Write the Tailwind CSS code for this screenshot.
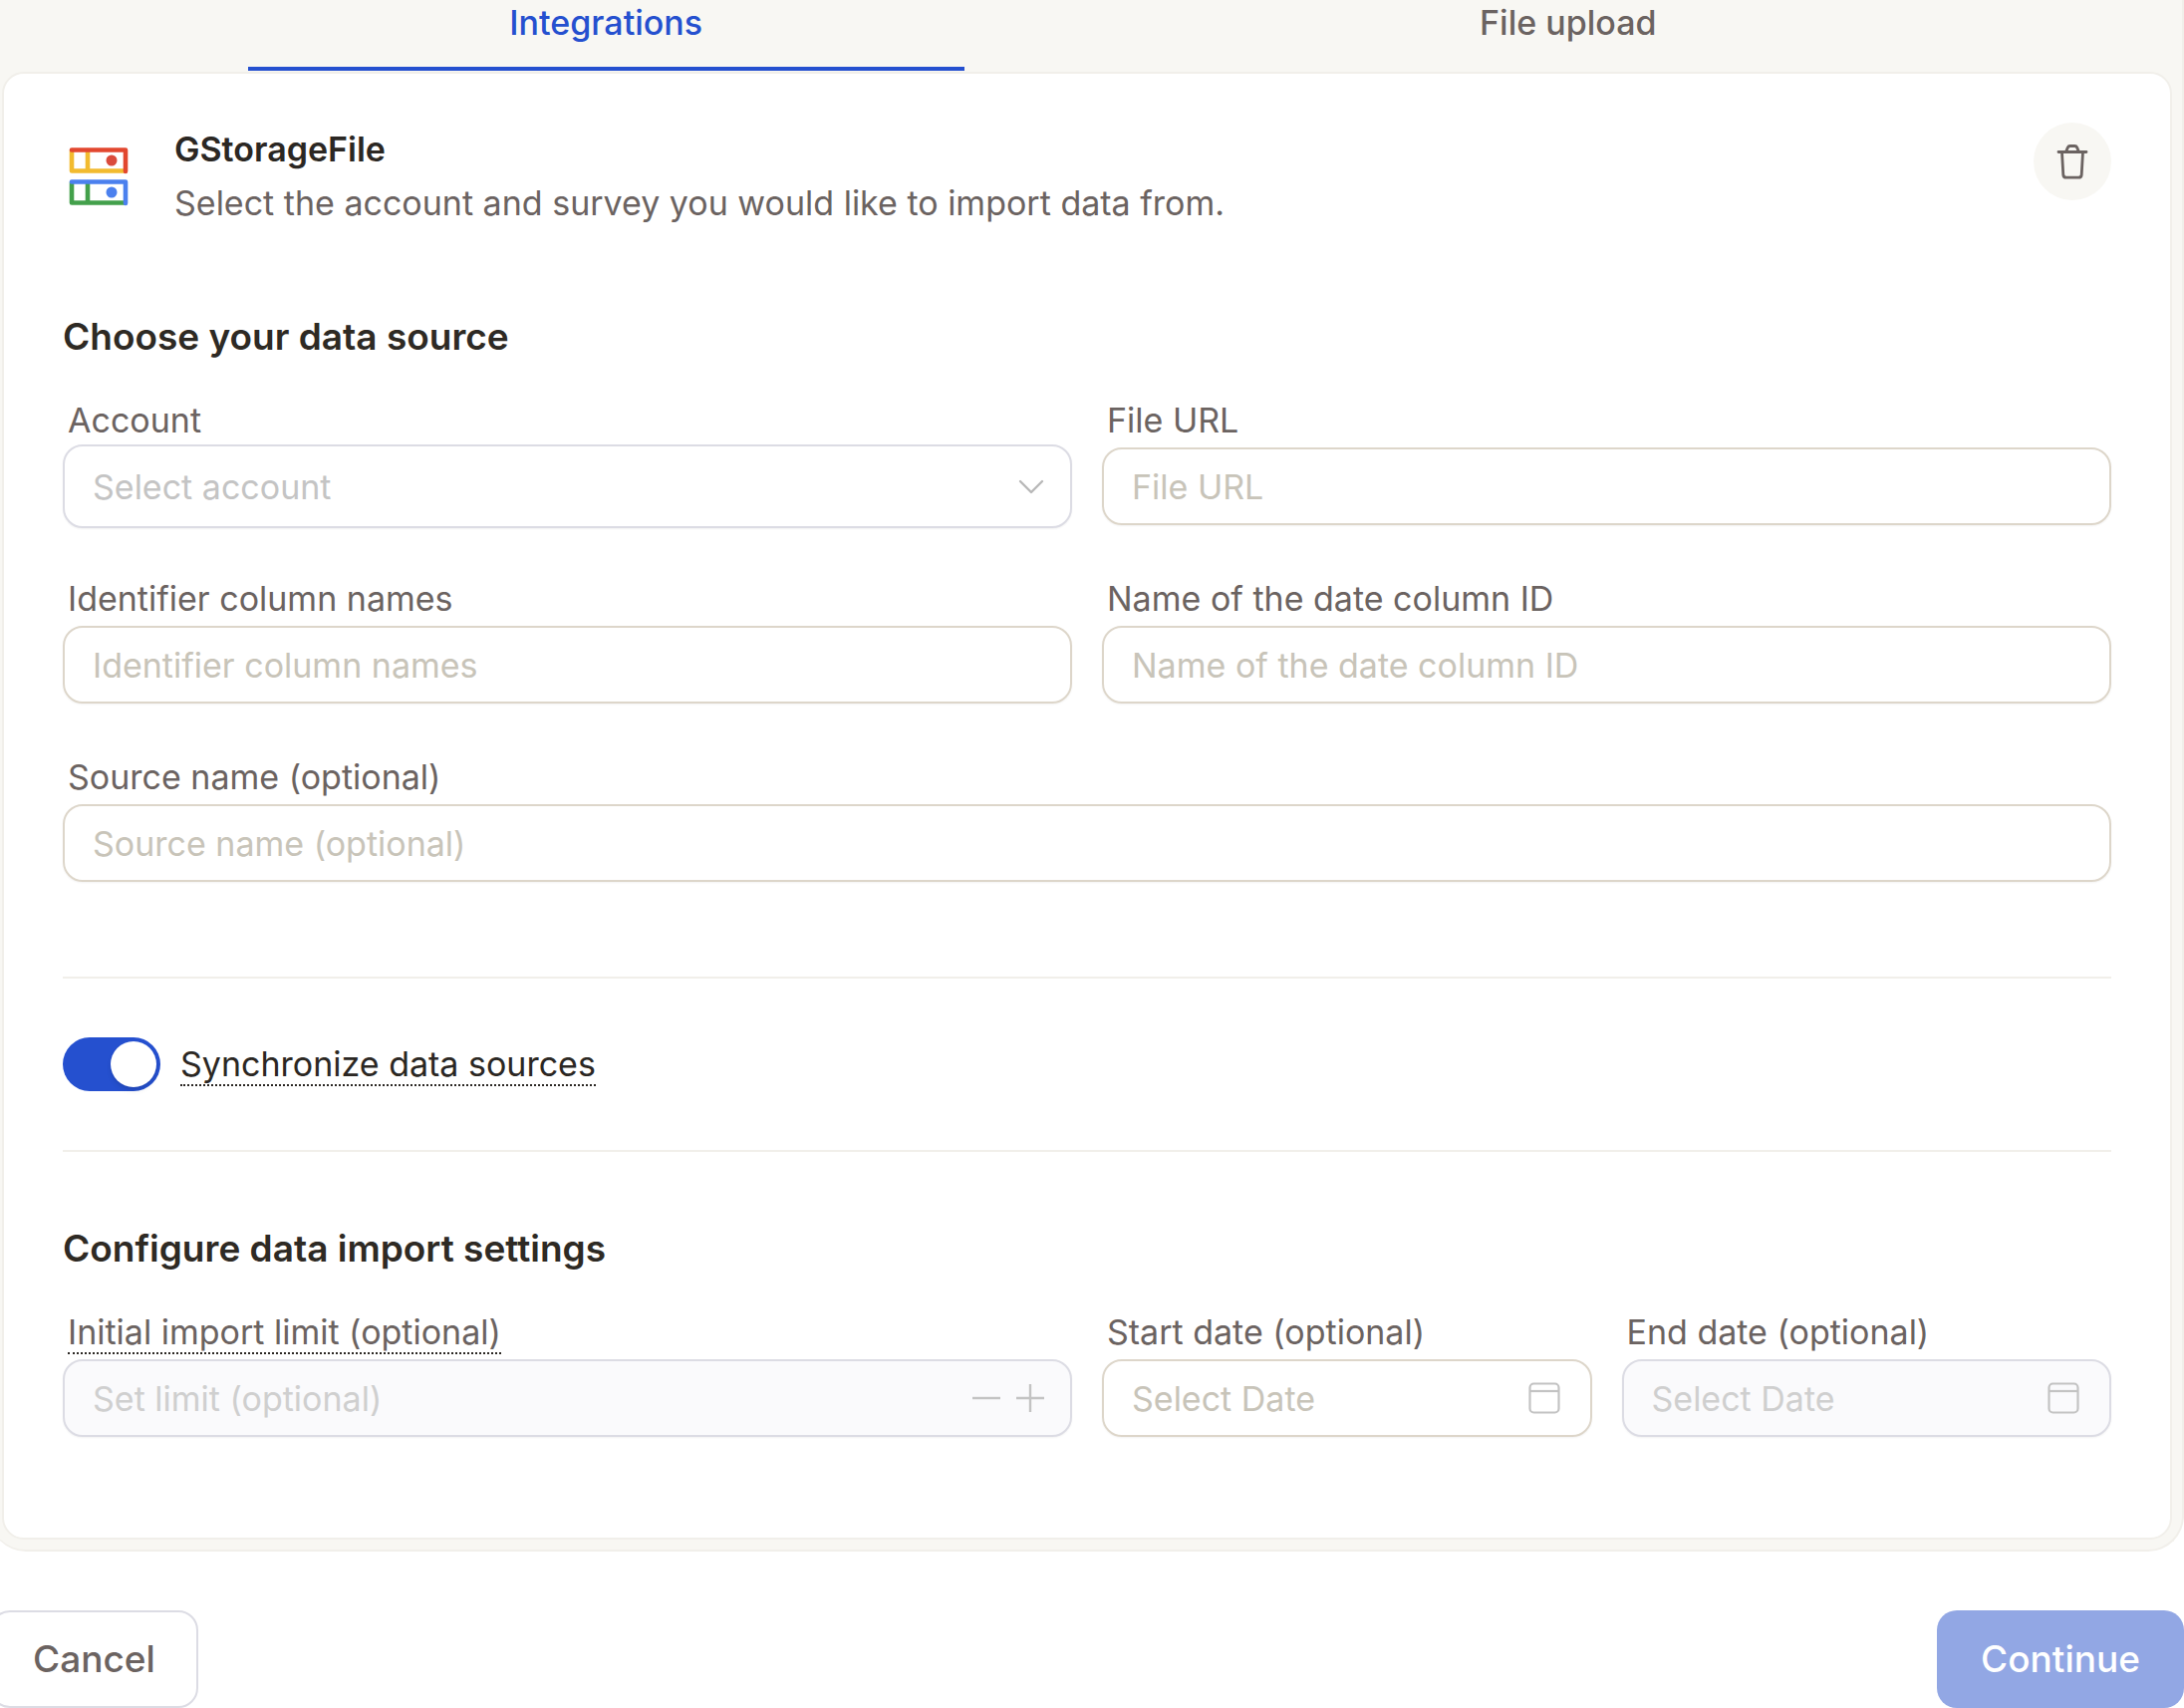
<!DOCTYPE html>
<html lang="en">
<head>
  <meta charset="UTF-8">
  <meta name="viewport" content="width=device-width, initial-scale=1.0">
  <title>Import data</title>
  <script src="https://cdn.jsdelivr.net/npm/@tailwindcss/browser@4"></script>
</head>
<body class="bg-white min-h-screen overflow-x-hidden font-['Inter',sans-serif] text-[34px] leading-10 text-[#6b6361]">
  <main class="-ml-[10px] pl-3 pr-[10px] pb-[10px] bg-[#f8f7f3] border-r-2 border-b-2 border-[#f1efea] rounded-b-[36px]">
    <nav class="flex justify-evenly h-[72px] font-medium" role="tablist">
      <button type="button" role="tab" aria-selected="true" class="w-[33%] h-[71px] pb-[24px] flex flex-col justify-end items-center border-b-4 border-[#2550cf] text-[#2550cf]">Integrations</button>
      <button type="button" role="tab" aria-selected="false" class="w-[33%] h-[71px] pb-[24px] flex flex-col justify-end items-center border-b-4 border-transparent">File upload</button>
    </nav>

    <form id="import-form" class="bg-white border-2 border-[#f1efea] rounded-[22px] px-[59px] pt-[49px] pb-[98px]">
      <header class="flex items-start justify-between">
        <div class="flex items-center">
          <svg class="w-[60px] h-[60px] ml-[6px] mr-[46px]" viewBox="0 0 60 60" fill="none" stroke-width="4.6" stroke-linecap="round" stroke-linejoin="round">
            <path d="M3 4v20.5h53M19 4v20.5" stroke="#f2bb2f"/>
            <path d="M3 3.5h54v21.5" stroke="#e2472f"/>
            <circle cx="43" cy="14" r="5.5" fill="#da4b3c"/>
            <path d="M3 36v20.5h53M19 36v20.5" stroke="#43a04b"/>
            <path d="M3 35.5h54v21.5" stroke="#4b80ee"/>
            <circle cx="43" cy="46" r="5.5" fill="#4b80ee"/>
          </svg>
          <div class="leading-[54px]">
            <h1 class="font-semibold text-[#2b2723]">GStorageFile</h1>
            <p>Select the account and survey you would like to import data from.</p>
          </div>
        </div>
        <button type="button" aria-label="Remove source" class="w-[78px] h-[78px] rounded-full bg-[#f8f7f3] flex items-center justify-center">
          <svg class="w-9 h-9" viewBox="0 0 36 36" fill="none" stroke="#6b6361" stroke-width="2.8" stroke-linecap="round" stroke-linejoin="round">
            <path d="M4 8.500h28M7.500 8.500l1.300 23a3 3 0 0 0 3 2.700h12.400a3 3 0 0 0 3-2.700L28.500 8.500M11.500 8.500l1.800-4.400a2.600 2.600 0 0 1 2.400-1.600h4.600a2.600 2.600 0 0 1 2.400 1.600l1.800 4.400"/>
          </svg>
        </button>
      </header>

      <section class="mt-[83px]">
        <h2 class="text-[37px] leading-[48px] font-semibold text-[#2e2a24]">Choose your data source</h2>
        <div class="mt-10 grid grid-cols-2 gap-x-[30px] gap-y-[51px]">
          <div>
            <label for="account" class="block pl-[5px] mb-1">Account</label>
            <div class="relative h-[84px] flex items-center">
              <select id="account" class="w-full h-[84px] px-7 pt-0.5 border-2 border-[#dcdce4] rounded-[20px] appearance-none bg-white text-[#c4c4c4] shadow-xs">
                <option>Select account</option>
              </select>
              <svg class="absolute right-7 w-[26px] h-[26px] pointer-events-none" viewBox="0 0 26 26" fill="none" stroke="#b8b8b8" stroke-width="2.4" stroke-linecap="round" stroke-linejoin="round"><path d="M2 8l11 11L24 8"/></svg>
            </div>
          </div>
          <div>
            <label for="file-url" class="block pl-[5px] mb-1">File URL</label>
            <div class="h-[84px] flex items-center">
              <input id="file-url" type="text" placeholder="File URL" class="w-full h-[78px] px-7 border-2 border-[#ddd6ca] rounded-[20px] placeholder:text-[#c8c4b9] shadow-xs">
            </div>
          </div>
          <div>
            <label for="identifiers" class="block pl-[5px] mb-1">Identifier column names</label>
            <div class="h-[84px] flex items-center">
              <input id="identifiers" type="text" placeholder="Identifier column names" class="w-full h-[78px] px-7 border-2 border-[#ddd6ca] rounded-[20px] placeholder:text-[#c8c4b9] shadow-xs">
            </div>
          </div>
          <div>
            <label for="date-column" class="block pl-[5px] mb-1">Name of the date column ID</label>
            <div class="h-[84px] flex items-center">
              <input id="date-column" type="text" placeholder="Name of the date column ID" class="w-full h-[78px] px-7 border-2 border-[#ddd6ca] rounded-[20px] placeholder:text-[#c8c4b9] shadow-xs">
            </div>
          </div>
          <div class="col-span-2">
            <label for="source-name" class="block pl-[5px] mb-1">Source name (optional)</label>
            <div class="h-[84px] flex items-center">
              <input id="source-name" type="text" placeholder="Source name (optional)" class="w-full h-[78px] px-7 border-2 border-[#ddd6ca] rounded-[20px] placeholder:text-[#c8c4b9] shadow-xs">
            </div>
          </div>
        </div>
      </section>

      <div class="mt-[92px] py-[59px] border-y-2 border-[#f1efea] flex items-center gap-5">
        <input id="sync" type="checkbox" role="switch" checked class="appearance-none flex items-center w-[98px] h-[54px] p-1 rounded-full bg-[#cfcfcf] checked:bg-[#2550cf] checked:justify-end before:w-[46px] before:h-[46px] before:rounded-full before:bg-white before:shadow-md">
        <label for="sync" class="text-[#2b2723]"><span class="border-b-2 border-dotted border-[#2b2723]">Synchronize data sources</span></label>
      </div>

      <section class="mt-[73px]">
        <h2 class="text-[37px] leading-[48px] font-semibold text-[#2e2a24]">Configure data import settings</h2>
        <div class="mt-10 grid grid-cols-4 gap-x-[30px]">
          <div class="col-span-2">
            <label for="limit" class="block pl-[5px] mb-1"><span class="border-b-2 border-dotted border-[#2b2723]">Initial import limit (optional)</span></label>
            <div class="relative h-[84px] flex items-center">
              <input id="limit" type="text" inputmode="numeric" placeholder="Set limit (optional)" disabled class="w-full h-[78px] px-7 border-2 border-[#dcdce4] rounded-[20px] bg-[#fafafc] placeholder:text-[#cfcfcf] shadow-xs">
              <div class="absolute right-7 flex gap-4">
                <button type="button" aria-label="Decrease" disabled>
                  <svg class="w-7 h-7" viewBox="0 0 28 28" stroke="#c3c3c3" stroke-width="2.4"><path d="M0 14h28"/></svg>
                </button>
                <button type="button" aria-label="Increase" disabled>
                  <svg class="w-7 h-7" viewBox="0 0 28 28" stroke="#c3c3c3" stroke-width="2.4"><path d="M0 14h28M14 0v28"/></svg>
                </button>
              </div>
            </div>
          </div>
          <div>
            <label for="start-date" class="block pl-[5px] mb-1">Start date (optional)</label>
            <div class="relative h-[84px] flex items-center">
              <input id="start-date" type="text" placeholder="Select Date" class="w-full h-[78px] px-7 border-2 border-[#ddd6ca] rounded-[20px] placeholder:text-[#c8c4b9] shadow-xs">
              <svg class="absolute right-8 w-8 h-8 pointer-events-none" viewBox="0 0 32 32" fill="none" stroke="#c3c3c3" stroke-width="2.2"><rect x="1.5" y="1.5" width="29" height="29" rx="4"/><path d="M2 9h28"/></svg>
            </div>
          </div>
          <div>
            <label for="end-date" class="block pl-[5px] mb-1">End date (optional)</label>
            <div class="relative h-[84px] flex items-center">
              <input id="end-date" type="text" placeholder="Select Date" disabled class="w-full h-[78px] px-7 border-2 border-[#dcdce4] rounded-[20px] bg-[#fafafc] placeholder:text-[#cfcfcf] shadow-xs">
              <svg class="absolute right-8 w-8 h-8 pointer-events-none" viewBox="0 0 32 32" fill="none" stroke="#c3c3c3" stroke-width="2.2"><rect x="1.5" y="1.5" width="29" height="29" rx="4"/><path d="M2 9h28"/></svg>
            </div>
          </div>
        </div>
      </section>
    </form>
  </main>

  <footer class="mt-[59px] flex justify-between text-[37px] font-medium">
    <button type="button" class="-ml-[10px] h-[98px] px-[41px] bg-white border-2 border-[#dcdce4] rounded-[20px]">Cancel</button>
    <button type="submit" form="import-form" disabled class="h-[98px] px-11 rounded-[20px] bg-[#92a7e4] text-white">Continue</button>
  </footer>
</body>
</html>
